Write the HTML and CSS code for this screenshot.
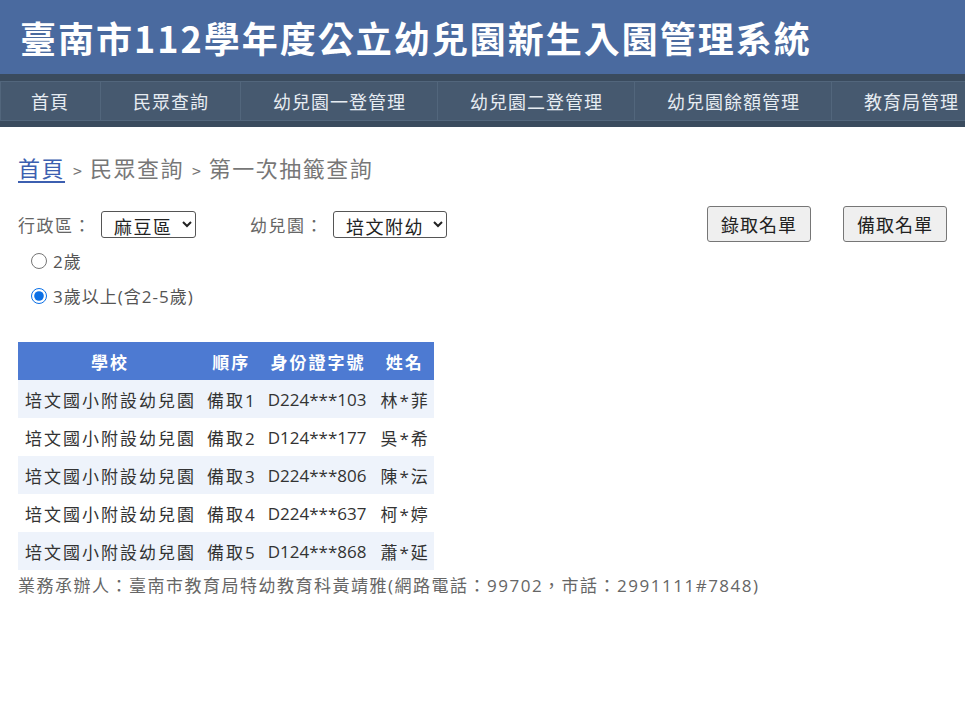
FILE: index.html
```html
<!DOCTYPE html>
<html lang="zh-Hant">
<head>
    <meta charset="UTF-8">
    <meta name="viewport" content="width=device-width, initial-scale=1.0">
    <title>臺南市112學年度公立幼兒園新生入園管理系統</title>
    <link rel="stylesheet" href="styles.css">
</head>
<body>
    <div class="header">
        <h1>臺南市112學年度公立幼兒園新生入園管理系統</h1>
    </div>
    <div class="nav">
        <a href="#">首頁</a>
        <a href="#">民眾查詢</a>
        <a href="#">幼兒園一登管理</a>
        <a href="#">幼兒園二登管理</a>
        <a href="#">幼兒園餘額管理</a>
        <a href="#">教育局管理</a>
    </div>

    <div class="content">
        <div class="breadcrumb">
            <a href="#">首頁</a><span class="sep">&gt;</span>民眾查詢<span class="sep">&gt;</span>第一次抽籤查詢
        </div>

        <div class="filter-row">
            <label>行政區：</label>
            <select class="sel">
                <option>麻豆區</option>
            </select>
            <label class="lbl-school">幼兒園：</label>
            <select class="sel">
                <option>培文附幼</option>
            </select>
            <div class="btns">
                <button>錄取名單</button>
                <button>備取名單</button>
            </div>
        </div>

        <div class="ages">
            <label><input type="radio" name="age">2歲</label>
            <label><input type="radio" name="age" checked>3歲以上(含2-5歲)</label>
        </div>

        <table class="list">
            <thead>
                <tr><th class="school">學校</th><th>順序</th><th>身份證字號</th><th>姓名</th></tr>
            </thead>
            <tbody>
                <tr><td class="cjk">培文國小附設幼兒園</td><td class="cjk">備取1</td><td>D224***103</td><td class="cjk">林*菲</td></tr>
                <tr><td class="cjk">培文國小附設幼兒園</td><td class="cjk">備取2</td><td>D124***177</td><td class="cjk">吳*希</td></tr>
                <tr><td class="cjk">培文國小附設幼兒園</td><td class="cjk">備取3</td><td>D224***806</td><td class="cjk">陳*沄</td></tr>
                <tr><td class="cjk">培文國小附設幼兒園</td><td class="cjk">備取4</td><td>D224***637</td><td class="cjk">柯*婷</td></tr>
                <tr><td class="cjk">培文國小附設幼兒園</td><td class="cjk">備取5</td><td>D124***868</td><td class="cjk">蕭*延</td></tr>
            </tbody>
        </table>
        <p class="contact">業務承辦人：臺南市教育局特幼教育科黃靖雅(網路電話：99702，市話：2991111#7848)</p>
    </div>
</body>
</html>
```

FILE: styles.css
```css
body {
    margin: 0;
    font-family: "Open Sans", "Noto Sans CJK TC", sans-serif;
    background: #fff;
    color: #333;
}

.header {
    background: #4a6a9f;
    height: 74px;
    padding-left: 20px;
    display: flex;
    align-items: center;
}

.header h1 {
    margin: 0;
    color: #fff;
    font-size: 36px;
    font-weight: bold;
    letter-spacing: 2px;
    font-family: "Noto Sans CJK TC", sans-serif;
}

.nav {
    background: #3a4b5e;
    padding: 7px 0 6px;
    display: flex;
    white-space: nowrap;
    overflow: hidden;
}

.nav a {
    background: #46596f;
    color: #e6ecf2;
    text-decoration: none;
    font-size: 18px;
    letter-spacing: 1px;
    height: 40px;
    line-height: 38px;
    padding: 0 31px 0 32px;
    border-top: 1px solid #52667c;
    border-bottom: 1px solid #52667c;
    border-right: 1px solid #52667c;
    box-sizing: border-box;
    flex-shrink: 0;
    font-family: "Noto Sans CJK TC", sans-serif;
}

.nav a:first-child {
    border-left: 1px solid #52667c;
    padding-left: 30px;
}

.content {
    padding: 0 18px;
}

.breadcrumb {
    margin-top: 24px;
    font-size: 22px;
    letter-spacing: 1.5px;
    color: #777;
    font-family: "Noto Sans CJK TC", sans-serif;
}

.breadcrumb a {
    color: #3c5fb0;
    text-decoration: underline;
    text-underline-offset: 4px;
}

.breadcrumb .sep {
    font-size: 16px;
    margin: 0 8px;
    letter-spacing: 0;
}

.filter-row {
    display: flex;
    align-items: center;
    margin-top: 23px;
    font-size: 17px;
    color: #666;
}

.filter-row label {
    letter-spacing: 1.5px;
    font-family: "Noto Sans CJK TC", sans-serif;
}

.sel {
    font-size: 18px;
    letter-spacing: 1.5px;
    font-family: "Noto Sans CJK TC", sans-serif;
    color: #222;
    border: 1px solid #555;
    border-radius: 3px;
    background: #fff;
    height: 27px;
    padding: 0 6px 0 8px;
    margin-left: 9px;
}

.lbl-school {
    margin-left: 54px;
}

.btns {
    margin-left: auto;
    display: flex;
    gap: 32px;
}

.btns button {
    font-size: 18px;
    letter-spacing: 1px;
    font-family: "Noto Sans CJK TC", sans-serif;
    color: #222;
    background: #efefef;
    border: 1px solid #767676;
    border-radius: 3px;
    height: 36px;
    width: 104px;
    padding: 0;
}

.ages {
    padding-left: 12px;
    font-size: 17px;
    letter-spacing: 1px;
    color: #555;
    margin-top: 1px;
}

.ages label {
    display: flex;
    align-items: center;
    height: 35px;
}

.ages input {
    width: 16px;
    height: 16px;
    margin: 0 6px 0 1px;
    accent-color: #0a6fe6;
}

.list {
    border-collapse: collapse;
    margin-top: 29px;
    font-size: 17px;
}

.list th {
    background: #4d7ad2;
    color: #fff;
    font-weight: bold;
    letter-spacing: 2px;
    height: 38px;
    padding: 0 5px 0 7px;
    font-family: "Noto Sans CJK TC", sans-serif;
}

.list td {
    height: 38px;
    padding: 0 7px;
    color: #333;
    white-space: nowrap;
}

.list td.cjk {
    letter-spacing: 2px;
    padding-right: 4px;
}

.list tbody tr:nth-child(odd) {
    background: #eef3fb;
}

.contact {
    margin: 2px 0 0;
    font-size: 17px;
    letter-spacing: 1.5px;
    color: #666;
}
```
